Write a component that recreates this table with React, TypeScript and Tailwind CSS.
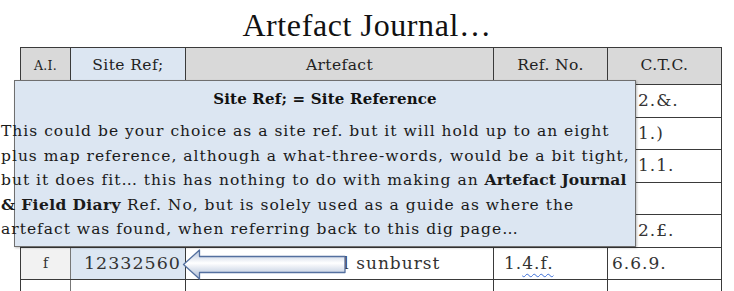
import React from "react";

const serif = "font-['DejaVu_Serif',serif]";

function HeadCell({ children, blue, small }: { children: React.ReactNode; blue?: boolean; small?: boolean }) {
  return (
    <th
      className={`border border-[#3a3a3a] font-normal text-center align-middle text-[#222] ${
        blue ? "bg-[#dce6f2]" : "bg-[#d9d9d9]"
      } ${small ? "text-[12.5px] tracking-[0.3px]" : "text-[15.5px] tracking-[0.4px]"}`}
    >
      {children}
    </th>
  );
}

type Row = { ai: string; site: string; artefact: string; ref: React.ReactNode; ctc: string; h: string; covered?: boolean };

const rows: Row[] = [
  { ai: "", site: "", artefact: "", ref: "", ctc: "2.&.", h: "h-[33px]", covered: true },
  { ai: "", site: "", artefact: "", ref: "", ctc: "1.)", h: "h-[32px]", covered: true },
  { ai: "", site: "", artefact: "", ref: "", ctc: "1.1.", h: "h-[33px]", covered: true },
  { ai: "", site: "", artefact: "", ref: "", ctc: "", h: "h-[32px]", covered: true },
  { ai: "", site: "", artefact: "", ref: "", ctc: "2.£.", h: "h-[33px]", covered: true },
  {
    ai: "f",
    site: "12332560",
    artefact: "Crystal ball sunburst",
    ref: (
      <>
        1.
        <span className="underline decoration-wavy decoration-[#3d6fd8] decoration-[1px] underline-offset-[4px]">4.f.</span>
      </>
    ),
    ctc: "6.6.9.",
    h: "h-[32px]",
  },
  { ai: "", site: "", artefact: "", ref: "", ctc: "", h: "h-[33px]" },
];

export default function App() {
  return (
    <div className={`relative w-[734px] h-[291px] overflow-hidden bg-white ${serif}`}>
      <h1 className="h-[47px] pt-[7px] text-center text-[32px] leading-[36px] tracking-[0.6px] text-[#111] font-['Liberation_Serif',serif]">
        Artefact Journal…
      </h1>

      <table className="ml-[20px] w-[701px] table-fixed border-collapse">
        <colgroup>
          <col className="w-[50px]" />
          <col className="w-[115px]" />
          <col className="w-[308px]" />
          <col className="w-[114px]" />
          <col className="w-[114px]" />
        </colgroup>
        <thead>
          <tr className="h-[37px]">
            <HeadCell small>A.I.</HeadCell>
            <HeadCell blue>Site Ref;</HeadCell>
            <HeadCell>Artefact</HeadCell>
            <HeadCell>Ref. No.</HeadCell>
            <HeadCell>C.T.C.</HeadCell>
          </tr>
        </thead>
        <tbody className="text-[17px] tracking-[1px] text-[#333]">
          {rows.map((r, i) => {
            const filled = i < 6;
            return (
              <tr key={i} className={r.h}>
                <td
                  className={`border border-[#3a3a3a] border-r-[#777] text-center text-[14px] tracking-normal ${
                    filled ? "bg-[#f2f2f2]" : "bg-white"
                  }`}
                >
                  {r.ai}
                </td>
                <td
                  className={`border border-[#3a3a3a] border-l-[#777] text-right pr-[4px] text-[17.5px] ${
                    filled ? "bg-[#dce6f2]" : "bg-white"
                  }`}
                >
                  {r.site}
                </td>
                <td className="border border-[#3a3a3a] text-center whitespace-nowrap">{r.artefact}</td>
                <td className="border border-[#3a3a3a] pl-[10px]">{r.ref}</td>
                <td className={`border border-[#3a3a3a] ${r.covered ? "pl-[30px]" : "pl-[4px]"}`}>{r.ctc}</td>
              </tr>
            );
          })}
        </tbody>
      </table>

      {/* Comment bubble explaining the Site Ref column */}
      <div className="absolute left-[14px] top-[80px] w-[622px] h-[167px] border border-[#6f6f6f] bg-[#dce6f2] shadow-[1px_1px_2px_rgba(0,0,0,0.25)]">
        <div className="pt-[8px] text-center text-[15px] font-bold leading-[20px] tracking-[0.2px] text-[#111]">
          Site Ref; = Site Reference
        </div>
        <p className="ml-[-14px] mt-[10px] whitespace-nowrap text-[15.5px] leading-[24.5px] tracking-[1px] text-[#1a1a1a]">
          This could be your choice as a site ref. but it will hold up to an eight
          <br />
          plus map reference, although a what-three-words, would be a bit tight,
          <br />
          but it does fit… this has nothing to do with making an <b className="tracking-[0.1px]">Artefact Journal</b>
          <br />
          <b className="tracking-[0.4px]">&amp; Field Diary</b> Ref. No, but is solely used as a guide as where the
          <br />
          artefact was found, when referring back to this dig page…
        </p>
      </div>

      {/* Pointer arrow toward the Site Ref cell */}
      <svg className="absolute left-[180px] top-[246px]" width="170" height="36" viewBox="180 246 170 36">
        <defs>
          <linearGradient id="arrowFill" x1="0" y1="0" x2="0" y2="1">
            <stop offset="0" stopColor="#b3c1d9" />
            <stop offset="0.45" stopColor="#ffffff" />
            <stop offset="1" stopColor="#a9b9d4" />
          </linearGradient>
        </defs>
        <path
          d="M183.5 264.5 L199.5 250 L199.5 256.5 L345 256.5 L345 272.5 L199.5 272.5 L199.5 279 Z"
          fill="url(#arrowFill)"
          stroke="#54709f"
          strokeWidth="1.3"
          strokeLinejoin="round"
        />
      </svg>
    </div>
  );
}
